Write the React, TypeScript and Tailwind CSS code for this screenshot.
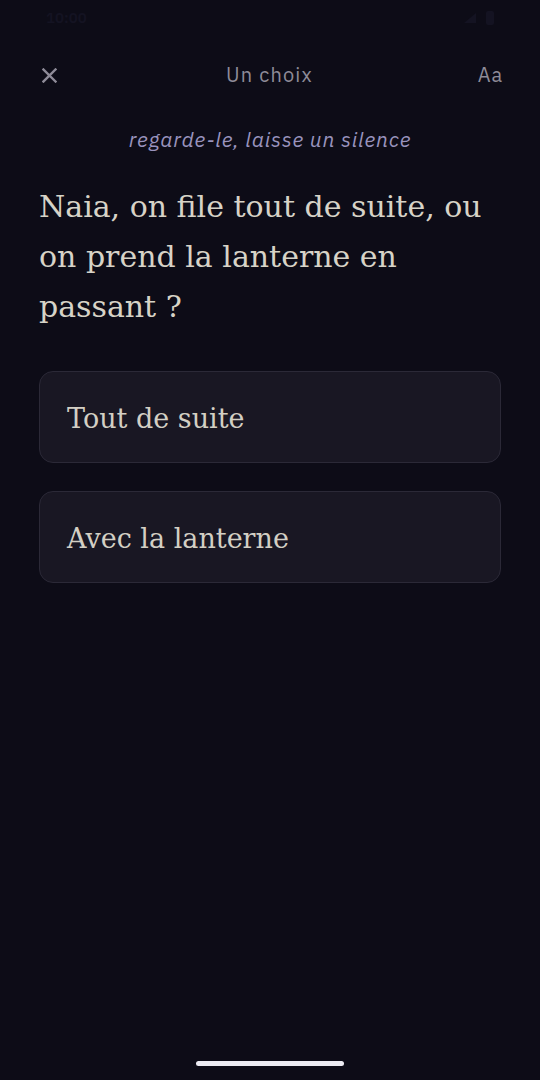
import React from 'react';

const sans = { fontFamily: '"IBM Plex Sans", "Open Sans", "Liberation Sans", sans-serif' };
const serif = { fontFamily: '"Source Serif Pro", "DejaVu Serif", serif' };

const choices = ['Tout de suite', 'Avec la lanterne'];

export default function App() {
  return (
    <div className="relative flex min-h-[1080px] w-full flex-col bg-[#0d0c17]" style={sans}>
      {/* status bar (barely visible on dark) */}
      <div className="flex h-[36px] items-center justify-between px-[46px] text-[15px] font-semibold text-[#141322]">
        <span>10:00</span>
        <div className="flex items-center gap-2">
          <svg width="16" height="14" viewBox="0 0 16 14" fill="#141322">
            <path d="M2 12 L14 2 L14 12 Z" />
          </svg>
          <div className="h-[14px] w-[8px] rounded-[2px] bg-[#141322]" />
        </div>
      </div>

      {/* header */}
      <div className="mt-[22px] flex h-[34px] items-center justify-between px-[37px]">
        <button className="flex h-[24px] w-[24px] items-center justify-center">
          <svg width="15" height="15" viewBox="0 0 15 15" fill="none" stroke="#8e8b98" strokeWidth="2.4" strokeLinecap="square">
            <path d="M1.5 1.5 L13.5 13.5 M13.5 1.5 L1.5 13.5" />
          </svg>
        </button>
        <span className="text-[20px] tracking-[0.06em] text-[#8e8b98]">Un choix</span>
        <span className="text-[20px] tracking-[0.04em] text-[#8e8b98]">Aa</span>
      </div>

      {/* hint */}
      <p className="mt-[32px] text-center text-[21px] italic tracking-[0.04em] text-[#9993bd]">
        regarde-le, laisse un silence
      </p>

      {/* question */}
      <h1 className="mt-[26px] px-[39px] text-[30px] leading-[50px] text-[#d7d3c7]" style={serif}>
        Naia, on file tout de suite, ou on prend la lanterne en passant ?
      </h1>

      {/* choices */}
      <div className="mt-[39px] flex flex-col gap-[28px] px-[39px]">
        {choices.map((c) => (
          <button
            key={c}
            className="flex h-[92px] items-center rounded-[14px] border border-[#2b2937] bg-[#191723] px-[27px] pt-[6px] text-left text-[27px] text-[#d3cfc4]"
            style={serif}
          >
            {c}
          </button>
        ))}
      </div>

      {/* home indicator */}
      <div className="absolute bottom-[14px] left-1/2 h-[5px] w-[148px] -translate-x-1/2 rounded-full bg-[#ecebf2]" />
    </div>
  );
}
